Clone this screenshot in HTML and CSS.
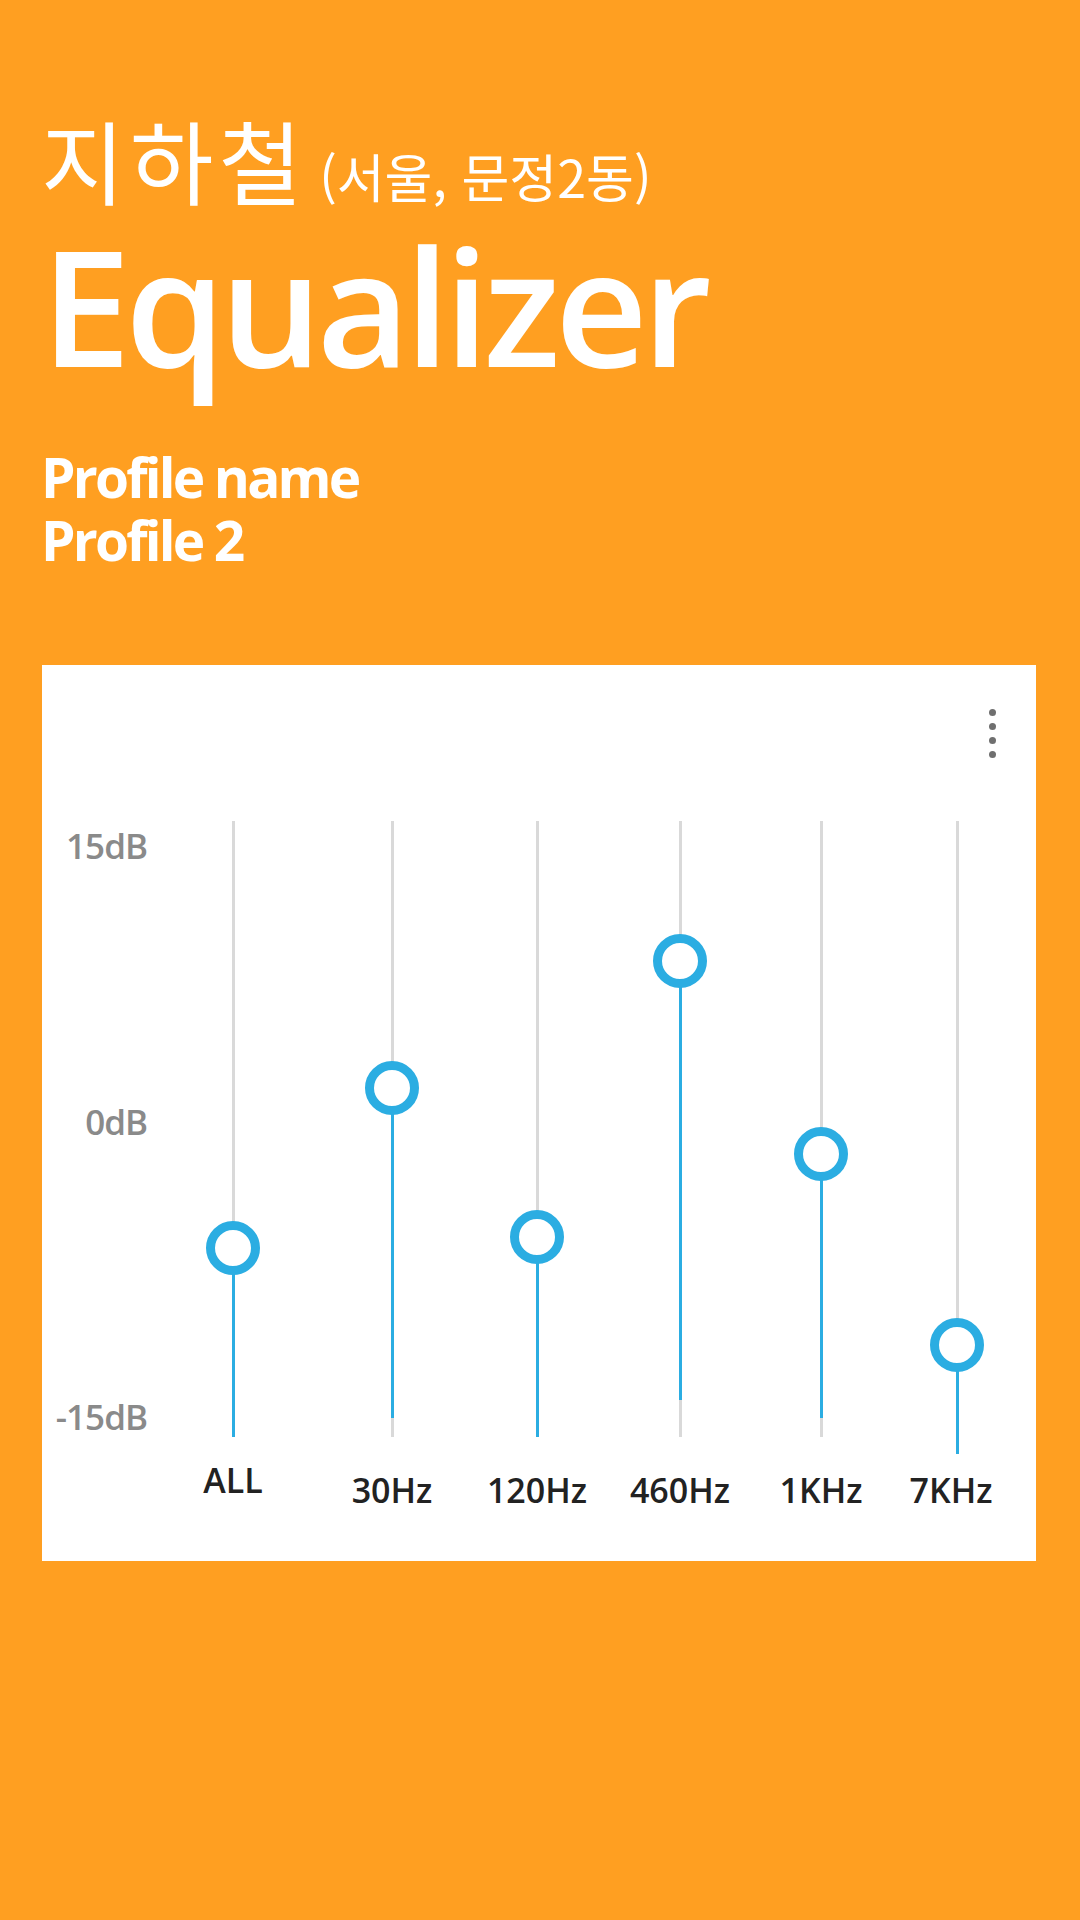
FILE: index.html
```html
<!DOCTYPE html>
<html lang="ko">
<head>
<meta charset="utf-8">
<title>Equalizer</title>
<link rel="stylesheet" href="styles.css">
</head>
<body>
<div class="screen">
  <header class="header">
    <div class="title-row">
      <span class="title-ko">지하철</span>
      <span class="title-sub">(서울, 문정2동)</span>
    </div>
    <h1 class="title-en">Equalizer</h1>
    <div class="profile">
      <div class="profile-line">Profile name</div>
      <div class="profile-line">Profile 2</div>
    </div>
  </header>

  <section class="card">
    <div class="card-head">
      <div class="menu" aria-label="More options">
        <span class="dot"></span><span class="dot"></span><span class="dot"></span><span class="dot"></span>
      </div>
    </div>

    <div class="chart">
      <div class="axis">
        <span class="tick tick-top">15dB</span>
        <span class="tick tick-mid">0dB</span>
        <span class="tick tick-bot">-15dB</span>
      </div>

      <div class="band">
        <div class="track" style="--knob:427px;--fill-end:616px">
          <div class="fill"></div>
          <div class="knob"></div>
        </div>
        <div class="band-label band-label-all">ALL</div>
      </div>

      <div class="band">
        <div class="track" style="--knob:267px;--fill-end:597px">
          <div class="fill"></div>
          <div class="knob"></div>
        </div>
        <div class="band-label">30Hz</div>
      </div>

      <div class="band">
        <div class="track" style="--knob:416px;--fill-end:616px">
          <div class="fill"></div>
          <div class="knob"></div>
        </div>
        <div class="band-label">120Hz</div>
      </div>

      <div class="band">
        <div class="track" style="--knob:140px;--fill-end:579px">
          <div class="fill"></div>
          <div class="knob"></div>
        </div>
        <div class="band-label">460Hz</div>
      </div>

      <div class="band">
        <div class="track" style="--knob:333px;--fill-end:597px">
          <div class="fill"></div>
          <div class="knob"></div>
        </div>
        <div class="band-label">1KHz</div>
      </div>

      <div class="band">
        <div class="track" style="--knob:524px;--fill-end:633px">
          <div class="fill"></div>
          <div class="knob"></div>
        </div>
        <div class="band-label band-label-last">7KHz</div>
      </div>
    </div>
  </section>
</div>
</body>
</html>
```

FILE: styles.css
```css
html, body {
  margin: 0;
  padding: 0;
}

body {
  background: #ff9f21;
  font-family: "Open Sans", "Noto Sans", "Noto Sans CJK KR", sans-serif;
}

.screen {
  width: 1080px;
  height: 1920px;
  overflow: hidden;
  background: #ff9f21;
}

/* ---------- header ---------- */
.header {
  padding: 112px 0 0 41px;
  color: #ffffff;
}

.title-row {
  display: flex;
  align-items: baseline;
}

.title-ko {
  font-family: "Noto Sans CJK KR", "Noto Sans", sans-serif;
  font-weight: 400;
  font-size: 91px;
  line-height: 92px;
  letter-spacing: 5px;
}

.title-sub {
  font-family: "Noto Sans CJK KR", "Noto Sans", sans-serif;
  font-weight: 400;
  font-size: 52px;
  line-height: 52px;
  margin-left: 12px;
}

.title-en {
  margin: 20px 0 0 0;
  font-family: "Open Sans", "Noto Sans", sans-serif;
  font-weight: 600;
  font-size: 161px;
  line-height: 161px;
  letter-spacing: -5.5px;
}

.profile {
  margin-top: 60px;
  font-family: "Open Sans", "Noto Sans", sans-serif;
  font-weight: 700;
  font-size: 55px;
  line-height: 63px;
  letter-spacing: -2.8px;
}

/* ---------- card ---------- */
.card {
  margin: 94px 44px 0 42px;
  height: 896px;
  box-sizing: border-box;
  padding-top: 44px;
  background: #ffffff;
}

.card-head {
  display: flex;
  justify-content: flex-end;
  padding-right: 40px;
}

.menu {
  display: flex;
  flex-direction: column;
  gap: 7px;
}

.dot {
  width: 7px;
  height: 7px;
  border-radius: 50%;
  background: #6f6f6f;
}

.chart {
  margin-top: 63px;
  display: grid;
  grid-template-columns: 112px 158px 160px 130px 156px 126px 146px;
  align-items: start;
}

.axis {
  height: 616px;
  display: flex;
  flex-direction: column;
  align-items: flex-end;
  padding: 7px 7px 0 0;
  box-sizing: border-box;
}

.tick {
  font-family: "Open Sans", "Noto Sans", sans-serif;
  font-weight: 600;
  font-size: 35px;
  line-height: 36px;
  color: #8a8a8a;
  letter-spacing: -1px;
}

.tick-mid {
  margin-top: 240px;
}

.tick-bot {
  margin-top: 259px;
}

.band {
  display: flex;
  flex-direction: column;
  align-items: center;
}

.track {
  position: relative;
  width: 3px;
  height: 616px;
  background: #d9d9d9;
}

.fill {
  position: absolute;
  left: 0;
  top: var(--knob);
  width: 3px;
  height: calc(var(--fill-end) - var(--knob));
  background: #2bade2;
}

.knob {
  position: absolute;
  left: 50%;
  top: var(--knob);
  width: 54px;
  height: 54px;
  margin: -27px 0 0 -27px;
  box-sizing: border-box;
  border: 9.5px solid #2bade2;
  border-radius: 50%;
  background: #ffffff;
}

.band-label {
  margin-top: 33px;
  font-family: "Open Sans", "Noto Sans", sans-serif;
  font-weight: 600;
  font-size: 34px;
  line-height: 40px;
  color: #222222;
  white-space: nowrap;
}

.band-label-all {
  margin-top: 23px;
}

.band-label-last {
  margin-right: 12px;
}
```
